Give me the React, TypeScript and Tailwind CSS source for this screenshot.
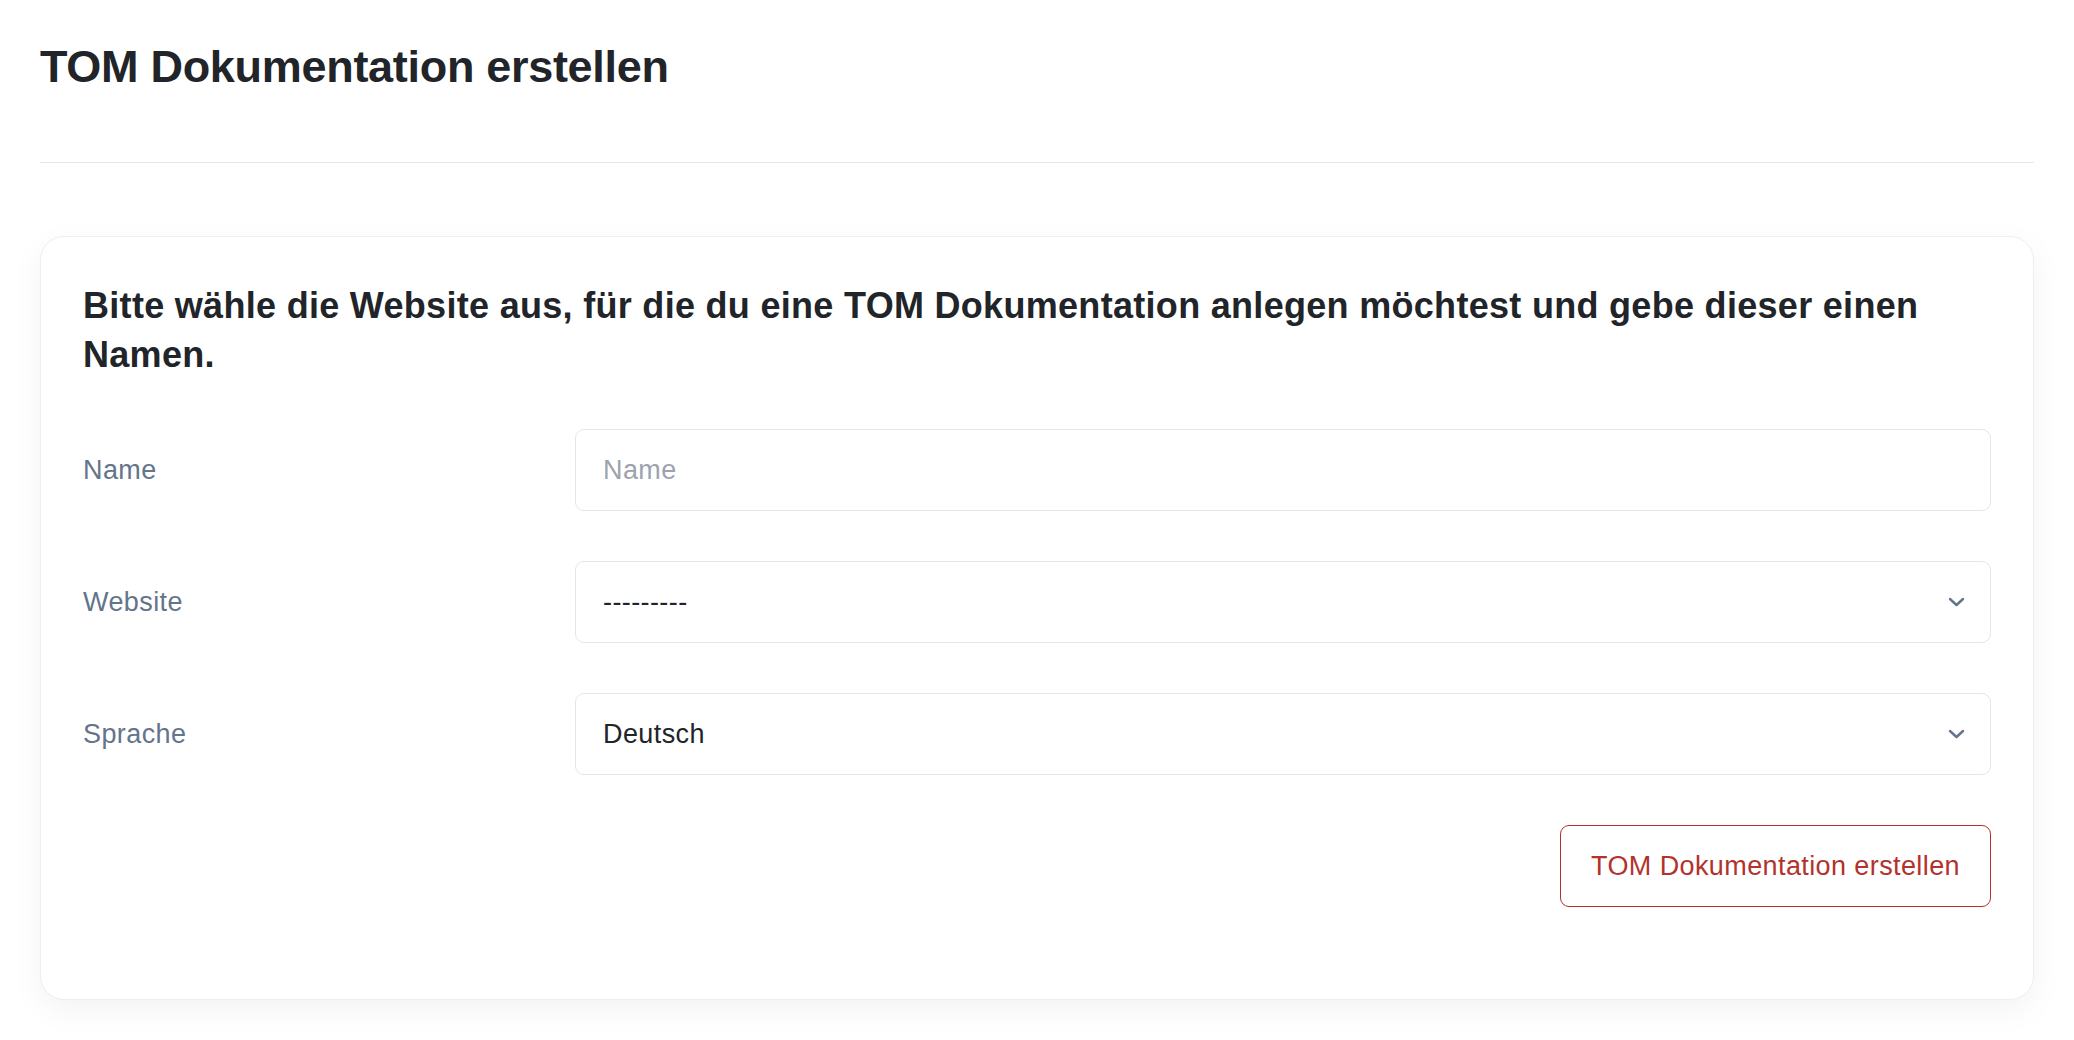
import React from "react";

function Chevron() {
  return (
    <svg width="17" height="10" viewBox="0 0 17 10" fill="none" className="shrink-0">
      <path d="M2 2l6.5 6 6.5-6" stroke="#64748b" strokeWidth="2.4" strokeLinecap="round" strokeLinejoin="round" />
    </svg>
  );
}

function Row({ label, children }: { label: string; children: React.ReactNode }) {
  return (
    <div className="flex items-center mb-[50px]">
      <label className="w-[492px] shrink-0 text-[27px] leading-[40px] tracking-[0.4px] text-[#64748b]">{label}</label>
      <div className="flex-1">{children}</div>
    </div>
  );
}

function SelectBox({ value }: { value: string }) {
  return (
    <div className="h-[82px] flex items-center justify-between rounded-[9px] border-[1.5px] border-[#e3e6ed] bg-white pl-[27px] pr-[25px] text-[27px] tracking-[0.4px] text-[#212529]">
      <span>{value}</span>
      <Chevron />
    </div>
  );
}

export default function App() {
  return (
    <div className="min-h-screen bg-white px-[40px] pt-[40px] font-['Liberation_Sans',Arial,sans-serif] text-[#212529]">
      <div className="border-b-[1.5px] border-[#e5e8ee] pb-[68px]">
        <h1 className="text-[45px] leading-[54px] font-bold tracking-[-0.3px]">TOM Dokumentation erstellen</h1>
      </div>

      <div className="mt-[73px] rounded-[24px] border-[1.5px] border-[#eceef4] bg-white px-[42px] pt-[44px] pb-[42px] shadow-[0_10px_32px_rgba(15,23,42,0.05)]">
        <h2 className="text-[36px] leading-[49px] font-bold tracking-[0.3px] mb-[50px]">
          Bitte wähle die Website aus, für die du eine TOM Dokumentation anlegen möchtest und gebe dieser einen Namen.
        </h2>

        <Row label="Name">
          <input
            placeholder="Name"
            className="w-full h-[82px] rounded-[9px] border-[1.5px] border-[#e3e6ed] bg-white px-[27px] text-[27px] tracking-[0.4px] text-[#212529] placeholder:text-[#9ca3af] outline-none"
          />
        </Row>
        <Row label="Website">
          <SelectBox value="---------" />
        </Row>
        <Row label="Sprache">
          <SelectBox value="Deutsch" />
        </Row>

        <div className="flex justify-end mb-[50px]">
          <button className="h-[82px] rounded-[9px] border-[1.5px] border-[#b3322c] bg-white px-[30px] text-[27px] tracking-[0.4px] text-[#b3322c]">
            TOM Dokumentation erstellen
          </button>
        </div>
      </div>
    </div>
  );
}
